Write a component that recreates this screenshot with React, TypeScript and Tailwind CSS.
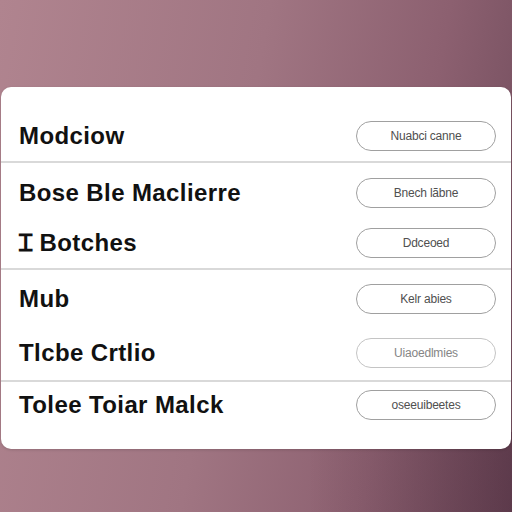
import React from "react";

const Row = ({ label, btn, h, light }: { label: string; btn: string; h: string; light?: boolean }) => (
  <div className={`flex items-center justify-between pl-[18px] pr-[15px] ${h}`}>
    <span className="text-[24px] font-bold text-[#111111] tracking-[0.4px] leading-none">{label}</span>
    <div
      className={`w-[140px] h-[30px] rounded-full border-[1.5px] flex items-center justify-center text-[12px] font-medium tracking-[-0.2px] ${
        light ? "border-[#c4c4c4] text-[#858585]" : "border-[#a0a0a0] text-[#505050]"
      }`}
    >
      {btn}
    </div>
  </div>
);

export default function App() {
  return (
    <div
      className="relative w-[512px] h-[512px] overflow-hidden pt-[87px] bg-[linear-gradient(100deg,#b0848f_0%,#a07582_45%,#8c6070_75%,#6e4a5a_100%)]"
      style={{ fontFamily: '"Liberation Sans", Arial, sans-serif' }}
    >
      <div className="absolute left-0 right-0 bottom-0 h-[80px] bg-[linear-gradient(90deg,rgba(0,0,0,0)_0%,rgba(0,0,0,0)_60%,rgba(40,10,30,0.25)_100%)]" />
      <div className="relative mx-[1px] h-[362px] bg-white rounded-[10px] pt-[24px] shadow-[0_1px_3px_rgba(0,0,0,0.15)]">
        <div className="border-b-[2px] border-[#d9d9d9]">
          <Row label="Modciow" btn="Nuabci canne" h="h-[50px]" />
        </div>
        <div className="border-b-[2px] border-[#d9d9d9] pt-[5px]">
          <Row label="Bose Ble Maclierre" btn="Bnech lãbne" h="h-[50px]" />
          <Row label="Ɪ Botches" btn="Ddceoed" h="h-[50px]" />
        </div>
        <div className="border-b-[2px] border-[#d9d9d9] pt-[2px]">
          <Row label="Mub" btn="Kelr abies" h="h-[54px]" />
          <Row label="Tlcbe Crtlio" btn="Uiaoedlmies" h="h-[54px]" light />
        </div>
        <div>
          <Row label="Tolee Toiar Malck" btn="oseeuibeetes" h="h-[46px]" />
        </div>
      </div>
    </div>
  );
}
